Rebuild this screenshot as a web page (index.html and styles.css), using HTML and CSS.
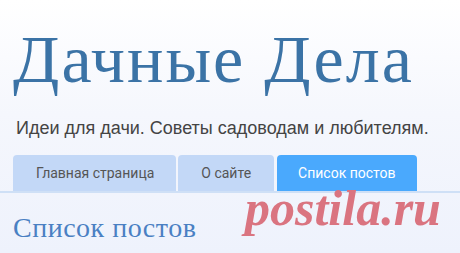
FILE: index.html
```html
<!doctype html>
<html>
<head>
  <meta charset="utf-8">
  <link rel="stylesheet" href="styles.css">
</head>
<body>
  <div class="header">
    <h1 class="site-title">Дачные Дела</h1>
    <p class="tagline">Идеи для дачи. Советы садоводам и любителям.</p>
  </div>

  <div class="tabs">
    <a class="tab home">Главная страница</a>
    <a class="tab about">О сайте</a>
    <a class="tab current">Список постов</a>
  </div>

  <div class="content">
    <h2 class="page-title">Список постов</h2>
    <span class="watermark">postila.ru</span>
  </div>
</body>
</html>
```

FILE: styles.css
```css
html, body {
  height: 100%;
}
body {
  margin: 0;
  background: linear-gradient(#ffffff 0%, #f5f7fd 45%, #eef2fc 100%);
  font-family: "Liberation Sans", Arial, sans-serif;
  overflow: hidden;
}
.header {
  padding: 21px 0 0 13px;
}
.site-title {
  margin: 0;
  font-family: "Liberation Serif", "Times New Roman", serif;
  font-weight: normal;
  font-size: 68px;
  letter-spacing: 2px;
  line-height: 76px;
  color: #3b73a6;
}
.tagline {
  margin: 21px 0 0 3px;
  font-size: 18px;
  line-height: 20px;
  color: #444;
}
.tabs {
  display: flex;
  gap: 2px;
  margin-top: 17px;
  padding-left: 13px;
  border-bottom: 2px solid #cfe0f6;
}
.tab {
  display: block;
  height: 36px;
  line-height: 36px;
  padding: 0 21px;
  background: #c3d8f7;
  border-radius: 4px 4px 0 0;
  font-family: Roboto, "Liberation Sans", sans-serif;
  font-size: 14px;
  color: #555;
}
.tab.home {
  padding: 0 22px 0 23px;
}
.tab.about {
  padding: 0 23px;
}
.tab.current {
  margin-left: 1px;
  background: #4aa9fd;
  color: #fff;
}
.content {
  position: relative;
  padding: 19px 13px 0;
}
.page-title {
  margin: 0;
  font-family: "Liberation Serif", "Times New Roman", serif;
  font-weight: normal;
  font-size: 28px;
  line-height: 32px;
  letter-spacing: 0.5px;
  color: #4a80c3;
}
.watermark {
  position: absolute;
  left: 245px;
  top: -14px;
  font-family: "Liberation Serif", serif;
  font-weight: bold;
  font-style: italic;
  font-size: 50px;
  color: #da7480;
}
```
